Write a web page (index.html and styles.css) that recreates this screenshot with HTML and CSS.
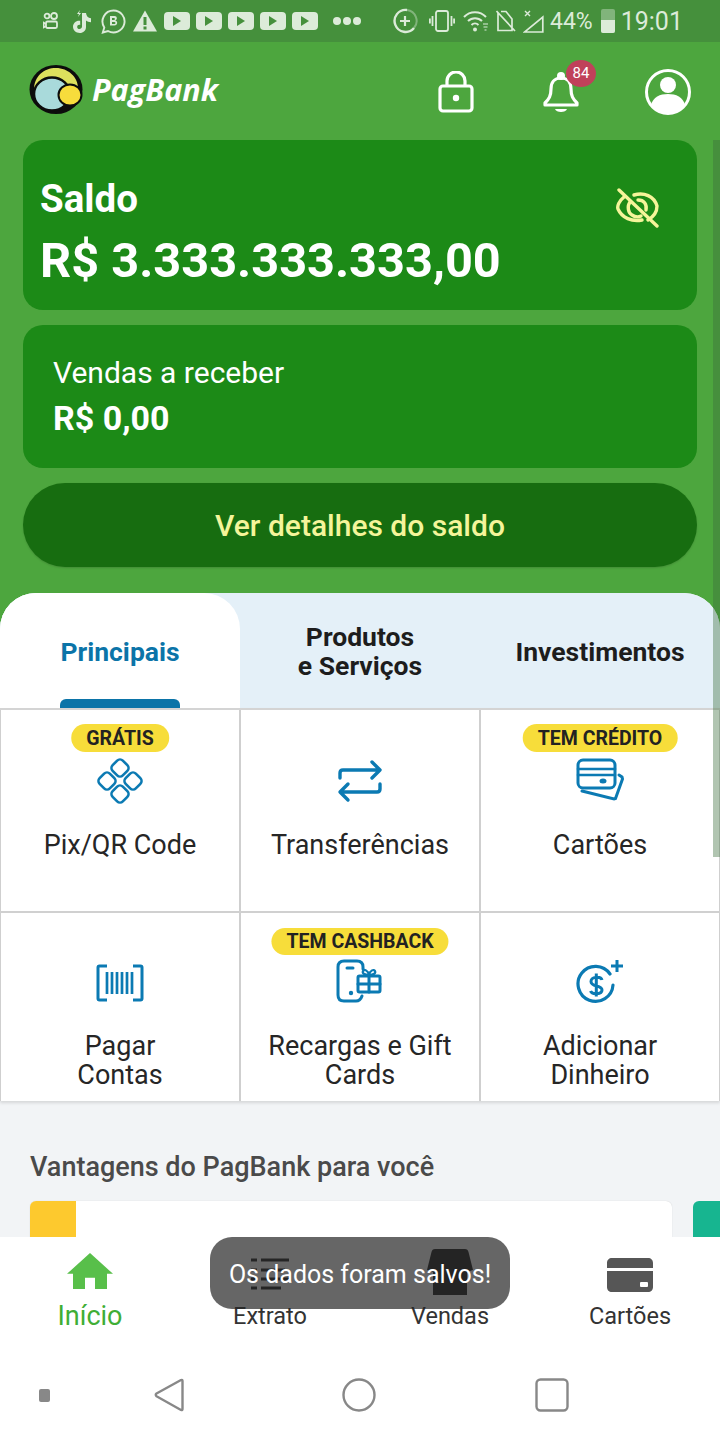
FILE: index.html
```html
<!DOCTYPE html>
<html lang="pt-BR">
<head>
<meta charset="utf-8">
<title>PagBank</title>
<link rel="stylesheet" href="styles.css">
</head>
<body>
<div class="status">
  <div class="status-left">
    <svg class="si" width="16" height="18" viewBox="0 0 16 18"><g fill="none" stroke="#dcebd9" stroke-width="1.8"><circle cx="4" cy="4" r="2.4"/><circle cx="11" cy="4" r="3"/><rect x="3" y="9.5" width="11" height="6.5" rx="1.5"/><path d="M3 12 0.5 10.5v5L3 14"/></g></svg>
    <svg class="si ml12" width="21" height="24" viewBox="0 0 21 24"><path d="M11 4h4c.3 3 2 5 5 5.2v4c-2 0-3.700-.6-5-1.600v6.400c0 3.500-2.700 6-6.200 6C5 24 2 21.300 2 17.800c0-3.800 3.300-6.700 7.200-6v4.200c-1.500-.6-3 .4-3 1.900 0 1.300 1 2.200 2.200 2.200 1.400 0 2.600-1 2.600-2.500z" fill="#dcebd9"/><path d="M6 5 9 1 8 4h2L7 8l1-3z" fill="#dcebd9"/></svg>
    <svg class="si ml9" width="25" height="25" viewBox="0 0 25 25"><path d="M12.500 1.500a11 11 0 1 1-5.500 20.500L1.800 23.500l1.500-5A11 11 0 0 1 12.500 1.500z" fill="none" stroke="#dcebd9" stroke-width="1.900"/><path d="M9 7h4.500c3 0 3 3.800.8 4.500 2.800.6 2.500 5-.8 5H9zM11 9v2h2c1.200 0 1.200-2 0-2zM11 13v2h2.500c1.300 0 1.300-2 0-2z" fill="#dcebd9" fill-rule="evenodd"/></svg>
    <svg class="si ml7" width="24" height="22" viewBox="0 0 24 22"><path d="M12 0.500 24 21.500H0z" fill="#dcebd9"/><rect x="10.500" y="7" width="3" height="8" fill="#45903c"/><rect x="10.500" y="16.500" width="3" height="3" fill="#45903c"/></svg>
    <span class="yt first"><i></i></span><span class="yt"><i></i></span><span class="yt"><i></i></span><span class="yt"><i></i></span><span class="yt"><i></i></span>
    <span class="dots"><b></b><b></b><b></b></span>
  </div>
  <div class="status-right">
    <svg width="26" height="26" viewBox="0 0 26 26"><path d="M22 20A11 11 0 1 1 15 2" fill="none" stroke="#dcebd9" stroke-width="2.400"/><path d="M15 2a11 11 0 0 1 7 18" fill="none" stroke="#dcebd9" stroke-opacity=".4" stroke-width="2"/><path d="M13 8v10M8 13h10" stroke="#dcebd9" stroke-width="2.200"/></svg>
    <svg class="ml11" width="26" height="22" viewBox="0 0 26 22"><g fill="none" stroke="#dcebd9" stroke-width="1.800"><rect x="7" y="1" width="12" height="20" rx="2"/><path d="M3.500 6v10M0.900 8.500v5M22.500 6v10M25.100 8.500v5"/></g></svg>
    <svg class="ml8" width="25" height="22" viewBox="0 0 25 22"><g fill="none" stroke="#dcebd9" stroke-width="2"><path d="M1 7a15 15 0 0 1 22 0M5 11a10 10 0 0 1 14 0M8.500 15a5 5 0 0 1 7 0"/></g><circle cx="12" cy="19.500" r="2" fill="#dcebd9"/><path d="M20 14h5M20.500 17h4M21.500 20h2" stroke="#dcebd9" stroke-width="1.200"/></svg>
    <svg class="ml8" width="20" height="22" viewBox="0 0 20 22"><path d="M2 3V20.500H16V9L10 1.500H5M0.500 1 19 21" fill="none" stroke="#dcebd9" stroke-width="1.700"/></svg>
    <svg class="ml7" width="21" height="24" viewBox="0 0 21 24"><path d="M19.800 8V23H1.500z" fill="none" stroke="#dcebd9" stroke-width="1.700"/><path d="M2 2l5 5M7 2 2 7" stroke="#dcebd9" stroke-width="1.400"/></svg>
    <span class="pct">44%</span>
    <span class="batt"><i></i></span>
    <span class="time">19:01</span>
  </div>
</div>

<div class="main">
  <header class="top">
    <div class="brand">
      <svg width="55" height="51" viewBox="0 0 55 51"><ellipse cx="27" cy="25.500" rx="26.500" ry="24.500" fill="#0c0c0c"/><path d="M5 26C5 12 15 4 27 4s22 9 22 20l-10 3C34 16 15 13 5 26z" fill="#dde05d"/><ellipse cx="23" cy="30" rx="18" ry="16.500" fill="#a9dadb" stroke="#0c0c0c" stroke-width="2.500"/><ellipse cx="41" cy="31" rx="11.500" ry="10.500" fill="#f7dc3c" stroke="#0c0c0c" stroke-width="2"/></svg>
      <span class="brand-name">PagBank</span>
    </div>
    <div class="top-icons">
      <svg width="36" height="42" viewBox="0 0 36 42"><g fill="none" stroke="#fff" stroke-width="3.200"><rect x="2" y="15" width="32" height="25" rx="3"/><path d="M9 15V10a9 9 0 0 1 18 0v5"/></g><circle cx="18" cy="27" r="3.200" fill="#fff"/></svg>
      <span class="bell-wrap">
        <svg width="36" height="44" viewBox="0 0 36 44"><path d="M18 7c-7 0-10 5-10 11 0 7-2 10-6 14v2h32v-2c-4-4-6-7-6-14 0-6-3-11-10-11z" fill="none" stroke="#fff" stroke-width="3.200" stroke-linejoin="round"/><circle cx="18" cy="5" r="4" fill="#fff"/><path d="M12 38h12c-1 4-11 4-12 0z" fill="#fff"/></svg>
        <span class="badge-count">84</span>
      </span>
      <svg width="46" height="46" viewBox="0 0 46 46"><circle cx="23" cy="23" r="21.500" fill="none" stroke="#fff" stroke-width="3"/><circle cx="23" cy="16" r="8" fill="#fff"/><path d="M6 36c2-8 9-11 17-11s15 3 17 11a21 21 0 0 1-34 0z" fill="#fff"/></svg>
    </div>
  </header>

  <section class="hero">
    <div class="card saldo">
      <div>
        <div class="saldo-label">Saldo</div>
        <div class="saldo-value">R$ 3.333.333.333,00</div>
      </div>
      <svg class="eye" width="44" height="40" viewBox="0 0 44 40"><g fill="none" stroke="#f5f59a" stroke-width="3.400" stroke-linecap="round"><path d="M3 2 41 38"/><path d="M18 7c10-3 20 1 23 11 0 6-4 11-9 14M8 9C3 13 1 18 2 21c4 9 14 13 24 11"/><path d="M22 12c6 0 9 4 8 10M14 14c-3 4-2 11 2 13 3 2 7 2 9 1"/></g></svg>
    </div>
    <div class="card vendas">
      <div class="vendas-label">Vendas a receber</div>
      <div class="vendas-value">R$ 0,00</div>
    </div>
    <div class="details">Ver detalhes do saldo</div>
  </section>

  <section class="panel">
    <div class="tabs">
      <div class="tab active">Principais<span class="tab-bar"></span></div>
      <div class="tab">Produtos<br>e Serviços</div>
      <div class="tab">Investimentos</div>
    </div>
    <div class="grid">
      <div class="cell">
        <span class="tag">GRÁTIS</span>
        <svg class="ico" width="48" height="48" viewBox="0 0 48 48"><g fill="none" stroke="#0b7ab3" stroke-width="2.600"><rect x="16.800" y="3.800" width="14.400" height="14.400" rx="4" transform="rotate(45 24 11)"/><rect x="16.800" y="29.800" width="14.400" height="14.400" rx="4" transform="rotate(45 24 37)"/><rect x="3.800" y="16.800" width="14.400" height="14.400" rx="4" transform="rotate(45 11 24)"/><rect x="29.800" y="16.800" width="14.400" height="14.400" rx="4" transform="rotate(45 37 24)"/></g></svg>
        <span class="label">Pix/QR Code</span>
      </div>
      <div class="cell">
        <svg class="ico" width="48" height="48" viewBox="0 0 48 48"><g fill="none" stroke="#0b7ab3" stroke-width="3.400" stroke-linecap="round" stroke-linejoin="round"><path d="M4 21v-5c0-2 1-3 3-3h36M36 5l8 8-8 8"/><path d="M44 27v5c0 2-1 3-3 3H5M12 27l-8 8 8 8"/></g></svg>
        <span class="label">Transferências</span>
      </div>
      <div class="cell">
        <span class="tag">TEM CRÉDITO</span>
        <svg class="ico" width="48" height="48" viewBox="0 0 48 48"><g fill="none" stroke="#0b7ab3" stroke-width="3" stroke-linecap="round"><rect x="2" y="3" width="37" height="28" rx="5"/><path d="M2 12h37M2 18h37" stroke-width="2.600"/><path d="M43 18l3 2 .5 2-7 19.500-1.500.5L6 34"/></g><ellipse cx="27" cy="24" rx="3.500" ry="2.500" fill="#0b7ab3"/></svg>
        <span class="label">Cartões</span>
      </div>
      <div class="cell low">
        <svg class="ico" width="48" height="48" viewBox="0 0 48 48"><path d="M11 4H3.500a1.500 1.500 0 0 0-1.500 1.500v31A1.500 1.500 0 0 0 3.500 38H11M37 4h7.500A1.500 1.500 0 0 1 46 5.500v31a1.500 1.500 0 0 1-1.500 1.500H37" transform="translate(0 3)" fill="none" stroke="#0b7ab3" stroke-width="3"/><path d="M11 13v22M16 13v22M21 13v22M26 13v22M31 13v22M36 13v22" stroke="#0b7ab3" stroke-width="2.700"/></svg>
        <span class="label">Pagar<br>Contas</span>
      </div>
      <div class="cell low">
        <span class="tag">TEM CASHBACK</span>
        <svg class="ico" width="48" height="48" viewBox="0 0 48 48"><g fill="none" stroke="#0b7ab3" stroke-width="3" stroke-linecap="round"><path d="M27 10V8c0-4-2-6-6-6H8C4 2 2 4 2 8v28c0 4 2 6 6 6h12c3 0 5-2 6-5"/><path d="M11 9h6"/><rect x="22" y="17" width="22" height="16" rx="1.500"/><path d="M33 17v16M22 25h22"/><path d="M33 16c-5 0-7-2-6-4s5-1 6 4c1-5 5-6 6-4s-1 4-6 4z" stroke-width="2.200"/></g><circle cx="15" cy="34" r="2.200" fill="#0b7ab3"/></svg>
        <span class="label">Recargas e Gift<br>Cards</span>
      </div>
      <div class="cell low">
        <svg class="ico" width="48" height="48" viewBox="0 0 48 48"><g fill="none" stroke="#0b7ab3"><path d="M34 15A17.500 17.500 0 1 0 37 26" stroke-width="3.200" stroke-linecap="round"/><path d="M26 21c-1-4-11-3.500-11 1.500 0 6 11 3 11 8.500 0 4.500-10 5-11.500 1M20.300 14.500v23" stroke-width="3"/><path d="M41 1v12M35 7h12" stroke-width="3"/></g></svg>
        <span class="label">Adicionar<br>Dinheiro</span>
      </div>
    </div>
    <div class="perks">
      <h2 class="perks-title">Vantagens do PagBank para você</h2>
      <div class="perks-row">
        <div class="perk"><span class="perk-mark"></span></div>
        <div class="perk-next"></div>
      </div>
    </div>
  </section>
  <div class="scrollbar"></div>
</div>

<nav class="tabbar">
  <div class="tb-item on">
    <svg width="48" height="38" viewBox="0 0 48 40" preserveAspectRatio="none"><path d="M24 1 47 23h-6v16H29V27H19v12H7V23H1z" fill="#58bf4a"/></svg>
    <span class="tb-on">Início</span>
  </div>
  <div class="tb-item">
    <svg width="38" height="34" viewBox="0 0 38 34"><path d="M10 2H38M10 12H34M10 21H38M10 30H30M0 2H6M0 12H6M0 21H6M0 30H6" stroke="#222" stroke-width="3"/></svg>
    <span>Extrato</span>
  </div>
  <div class="tb-item">
    <svg class="store" width="46" height="46" viewBox="0 0 46 46"><path d="M8 0h30c2 0 3 1 3.500 3L46 21l-6 2v23H6V23l-6-2L4.500 3C5 1 6 0 8 0z" fill="#1e1e1e"/></svg>
    <span>Vendas</span>
  </div>
  <div class="tb-item">
    <svg width="46" height="34" viewBox="0 0 46 34"><path d="M0 10V5c0-3 2-5 5-5h36c3 0 5 2 5 5v5zM0 13h46v16c0 3-2 5-5 5H5c-3 0-5-2-5-5z" fill="#565656"/><rect x="33" y="24" width="8" height="5" rx="1" fill="#fff"/></svg>
    <span>Cartões</span>
  </div>
</nav>

<div class="sysnav">
  <span class="sys-dot"></span>
  <svg width="30" height="34" viewBox="0 0 30 34"><path d="M27 2 2.500 15.500c-1 .7-1 2 0 2.800L27 32c1 .4 1.500 0 1.500-1V3c0-1-.5-1.400-1.500-1z" fill="none" stroke="#888" stroke-width="2.400" stroke-linejoin="round"/></svg>
  <svg width="34" height="34" viewBox="0 0 34 34"><ellipse cx="17" cy="17" rx="15.500" ry="15.500" fill="none" stroke="#888" stroke-width="2.400"/></svg>
  <svg width="34" height="34" viewBox="0 0 34 34"><rect x="1.500" y="1.500" width="31" height="31" rx="4" fill="none" stroke="#888" stroke-width="2.400"/></svg>
</div>

<div class="toast">Os dados foram salvos!</div>
</body>
</html>
```
FILE: styles.css
```css
* { box-sizing: border-box; }
html, body { margin: 0; padding: 0; }
body {
  position: relative;
  width: 720px;
  height: 1440px;
  overflow: hidden;
  display: flex;
  flex-direction: column;
  font-family: Roboto, "Liberation Sans", sans-serif;
  background: #fff;
  color: #1d1d1d;
}
svg { display: block; flex: none; }

.status {
  height: 42px;
  flex: none;
  background: #45903c;
  display: flex;
  align-items: center;
  justify-content: space-between;
  padding: 0 39px 0 43px;
  color: #dcebd9;
}
.status-left, .status-right { display: flex; align-items: center; }
.ml7 { margin-left: 7px; }
.ml8 { margin-left: 8px; }
.ml9 { margin-left: 9px; }
.ml11 { margin-left: 11px; }
.ml12 { margin-left: 12px; }
.yt {
  width: 26px;
  height: 18px;
  margin-left: 6px;
  border-radius: 4px;
  background: #dcebd9;
  display: flex;
  align-items: center;
  justify-content: center;
}
.yt.first { margin-left: 7px; }
.yt i {
  width: 0;
  height: 0;
  border-left: 8px solid #45903c;
  border-top: 5px solid transparent;
  border-bottom: 5px solid transparent;
}
.dots { display: flex; gap: 2px; margin-left: 15px; margin-right: 31px; }
.dots b { width: 8px; height: 8px; border-radius: 50%; background: #dcebd9; }
.pct { font-size: 23px; margin-left: 6px; }
.batt {
  width: 14px;
  height: 24px;
  margin-left: 8px;
  border-radius: 2px;
  background: rgba(220, 235, 217, .4);
  display: flex;
  align-items: flex-end;
}
.batt i { display: block; width: 100%; height: 13px; background: #dcebd9; border-radius: 0 0 2px 2px; }
.time { font-size: 25px; margin-left: 6px; margin-right: 5px; }

.main {
  position: relative;
  flex: 1;
  min-height: 0;
  overflow: hidden;
  background: #4da63e;
  display: flex;
  flex-direction: column;
}
.top {
  height: 98px;
  flex: none;
  display: flex;
  align-items: center;
  justify-content: space-between;
  padding: 0 29px 0 29px;
}
.brand { display: flex; align-items: center; gap: 8px; margin-top: -4px; }
.brand-name {
  color: #fff;
  font-family: "Open Sans", sans-serif;
  font-style: italic;
  font-weight: 700;
  font-size: 30.500px;
  letter-spacing: 0;
}
.top-icons { display: flex; align-items: center; gap: 66px; margin-top: 1px; }
.bell-wrap { position: relative; display: block; margin-top: 2px; margin-left: 3px; }
.badge-count {
  position: absolute;
  left: 23px;
  top: -11px;
  width: 30px;
  height: 27px;
  border-radius: 50%;
  background: #c0415a;
  color: #fff;
  font-size: 15px;
  line-height: 27px;
  text-align: center;
}

.hero {
  flex: none;
  height: 453px;
  padding: 0 23px;
  display: flex;
  flex-direction: column;
  gap: 15px;
}
.card { background: #1c8a17; border-radius: 20px; color: #fff; }
.saldo {
  height: 170px;
  padding: 37px 37px 0 17px;
  display: flex;
  justify-content: space-between;
  align-items: flex-start;
}
.saldo-label { font-size: 38.500px; font-weight: 700; line-height: 44px; }
.saldo-value { font-size: 48.700px; font-weight: 700; line-height: 56px; margin-top: 12px; }
.eye { margin-top: 11px; }
.vendas { height: 143px; padding: 30px 30px 0; }
.vendas-label { font-size: 30px; line-height: 36px; }
.vendas-value { font-size: 34px; font-weight: 700; line-height: 40px; margin-top: 7px; }
.details {
  height: 84px;
  border-radius: 42px;
  background: #176d10;
  color: #f5f59a;
  font-size: 30px;
  font-weight: 500;
  display: flex;
  align-items: center;
  justify-content: center;
  box-shadow: 0 1px 2px rgba(0, 0, 0, .15);
}

.panel {
  flex: 1;
  min-height: 0;
  background: #f2f4f6;
  border-radius: 36px 36px 0 0;
  overflow: hidden;
  display: flex;
  flex-direction: column;
}
.tabs {
  height: 115px;
  flex: none;
  display: grid;
  grid-template-columns: 240px 240px 240px;
  background: #e4f0f8;
}
.tab {
  position: relative;
  display: flex;
  align-items: center;
  justify-content: center;
  text-align: center;
  font-size: 26.500px;
  font-weight: 700;
  line-height: 29px;
  padding-top: 1px;
  color: #1d1d1d;
}
.tab.active {
  background: #fff;
  color: #0b74a8;
  border-radius: 0 36px 0 0;
}
.tab-bar {
  position: absolute;
  left: 60px;
  bottom: 0;
  width: 120px;
  height: 9px;
  background: #0b74a8;
  border-radius: 6px 6px 0 0;
}
.grid {
  flex: none;
  display: grid;
  grid-template-columns: 240px 240px 240px;
  grid-template-rows: 203px 188px;
  border-top: 2px solid #d4d4d4;
  background: #fff;
  box-shadow: 0 2px 3px rgba(0, 0, 0, .12);
}
.cell {
  position: relative;
  display: flex;
  flex-direction: column;
  align-items: center;
  padding-top: 47px;
  background: #fff;
  border-left: 1px solid #cfcfcf;
  border-right: 1px solid #cfcfcf;
  border-bottom: 2px solid #d0d0d0;
}
.cell.low { padding-top: 46px; border-bottom: none; }
.ico { width: 48px; height: 48px; }
.label {
  margin-top: 26px;
  font-size: 27px;
  line-height: 29px;
  text-align: center;
  color: #262626;
}
.low .label { margin-top: 25px; }
.tag {
  position: absolute;
  top: 14px;
  left: 50%;
  transform: translateX(-50%);
  height: 28px;
  padding: 0 15px;
  border-radius: 14px;
  background: #f7dd3a;
  color: #222;
  font-size: 19.500px;
  font-weight: 700;
  line-height: 29px;
  white-space: nowrap;
}
.low .tag { top: 15px; height: 27px; line-height: 28px; }
.perks { flex: 1; padding: 0 0 0 30px; }
.perks-title {
  margin: 50px 0 0;
  font-size: 27px;
  font-weight: 500;
  line-height: 32px;
  color: #4a4a4a;
}
.perks-row { display: flex; margin-top: 18px; gap: 21px; }
.perk {
  flex: none;
  width: 642px;
  height: 80px;
  background: #fff;
  border-radius: 6px;
  overflow: hidden;
  box-shadow: 0 0 1px rgba(0, 0, 0, .2);
}
.perk-mark { display: block; width: 46px; height: 100%; background: #fdc92e; }
.perk-next { flex: none; width: 40px; height: 80px; background: #17b590; border-radius: 6px 0 0 0; }
.scrollbar {
  position: absolute;
  right: 0;
  top: 98px;
  width: 7px;
  height: 717px;
  background: rgba(60, 110, 60, .4);
}

.tabbar {
  flex: none;
  height: 113px;
  background: #fff;
  display: grid;
  grid-template-columns: repeat(4, 180px);
  position: relative;
}
.tb-item {
  display: flex;
  flex-direction: column;
  align-items: center;
  justify-content: flex-end;
  height: 94px;
  font-size: 23.500px;
  line-height: 30px;
  color: #333;
  gap: 6px;
}
.tb-item svg { margin-bottom: auto; margin-top: 21px; }
.tb-item.on svg { margin-top: 15px; }
.tb-item svg.store { margin-top: 15px; }
.tb-on { color: #3fae35; font-size: 27px; }
.sysnav {
  flex: none;
  height: 90px;
  background: #fff;
  position: relative;
  display: grid;
  grid-template-columns: 90px 158px 222px 163px;
  align-items: center;
  justify-items: center;
}
.sys-dot { width: 11px; height: 13px; background: #888; border-radius: 2px; justify-self: start; margin-left: 39px; }
.toast {
  position: absolute;
  left: 210px;
  top: 1237px;
  width: 300px;
  height: 72px;
  border-radius: 22px;
  background: rgba(39, 39, 39, .71);
  color: #fff;
  font-size: 25px;
  padding-top: 3px;
  display: flex;
  align-items: center;
  justify-content: center;
}
```
